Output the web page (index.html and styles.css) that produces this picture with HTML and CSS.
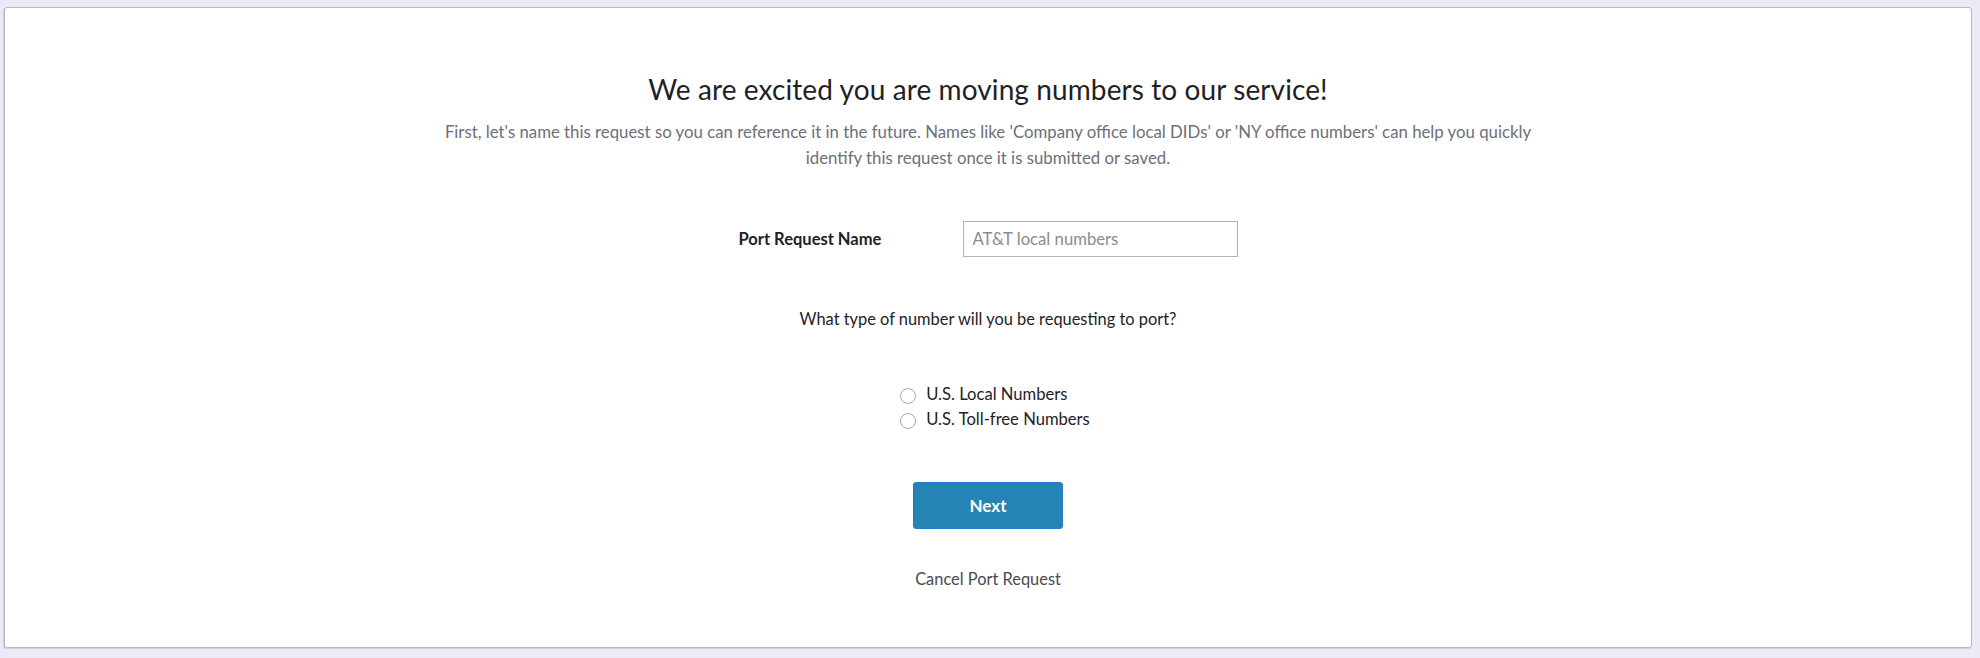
FILE: index.html
```html
<!DOCTYPE html>
<html lang="en">
<head>
<meta charset="utf-8">
<title>New Port Request</title>
<link rel="stylesheet" href="styles.css">
</head>
<body>
<main class="page">
  <section class="card">
    <h1 class="title">We are excited you are moving numbers to our service!</h1>
    <p class="intro">First, let's name this request so you can reference it in the future. Names like 'Company office local DIDs' or 'NY office numbers' can help you quickly identify this request once it is submitted or saved.</p>

    <div class="field-row">
      <label class="field-label" for="port-name">Port Request Name</label>
      <input class="field-input" id="port-name" type="text" placeholder="AT&amp;T local numbers">
    </div>

    <p class="question">What type of number will you be requesting to port?</p>

    <div class="choices">
      <label class="choice"><span class="radio"></span><span class="choice-text">U.S. Local Numbers</span></label>
      <label class="choice"><span class="radio"></span><span class="choice-text">U.S. Toll-free Numbers</span></label>
    </div>

    <button class="btn-next" type="button">Next</button>

    <a class="cancel-link" href="#">Cancel Port Request</a>
  </section>
</main>
</body>
</html>
```

FILE: styles.css
```css
html, body {
  margin: 0;
  padding: 0;
  background: #ebebf7;
}

body {
  font-family: Lato, "Open Sans", sans-serif;
  color: #222228;
}

.page {
  padding: 7px 8px 11px 4px;
}

.card {
  box-sizing: border-box;
  min-height: 640px;
  background: #ffffff;
  border: 1px solid #b9b7c8;
  border-radius: 3px;
  box-shadow: -1px 1px 1px rgba(150, 148, 170, 0.35);
  display: flex;
  flex-direction: column;
  align-items: center;
  padding: 63px 20px 58px;
}

.title {
  margin: 0;
  font-size: 28px;
  line-height: 36px;
  font-weight: 400;
  letter-spacing: 0.1px;
  color: #1f1f26;
}

.intro {
  margin: 12px 0 0;
  max-width: 1100px;
  text-align: center;
  font-size: 16.8px;
  line-height: 26px;
  color: #6e6f78;
}

.field-row {
  margin-top: 50px;
  display: flex;
  align-items: center;
  width: 499px;
}

.field-label {
  width: 224px;
  font-size: 16.5px;
  line-height: 20px;
  font-weight: 700;
  color: #222228;
}

.field-input {
  box-sizing: border-box;
  width: 275px;
  height: 36px;
  border: 1px solid #b3b1c2;
  border-radius: 0;
  padding: 0 9px;
  font-family: inherit;
  font-size: 16.7px;
  color: #333;
  outline: none;
}

.field-input::placeholder {
  color: #8b8b92;
}

.question {
  margin: 52px 0 0;
  font-size: 16.4px;
  line-height: 20px;
  color: #222228;
}

.choices {
  margin-top: 53px;
  display: flex;
  flex-direction: column;
  padding-left: 14px;
}

.choice {
  display: flex;
  align-items: flex-start;
  font-size: 16.6px;
  line-height: 25px;
  color: #222228;
  cursor: pointer;
}

.radio {
  box-sizing: border-box;
  width: 16px;
  height: 16px;
  margin-top: 6px;
  margin-right: 10px;
  border: 1px solid #a9a9ae;
  border-radius: 50%;
  background: #fff;
  flex: none;
}

.btn-next {
  margin-top: 50px;
  box-sizing: border-box;
  width: 150px;
  height: 47px;
  background: #2484b4;
  border: 1px solid #1f7ad6;
  border-radius: 3px;
  color: #ffffff;
  font-family: inherit;
  font-size: 17px;
  font-weight: 700;
  cursor: pointer;
}

.cancel-link {
  margin-top: 40px;
  font-size: 16.4px;
  line-height: 20px;
  color: #4a4a50;
  text-decoration: none;
}
```
